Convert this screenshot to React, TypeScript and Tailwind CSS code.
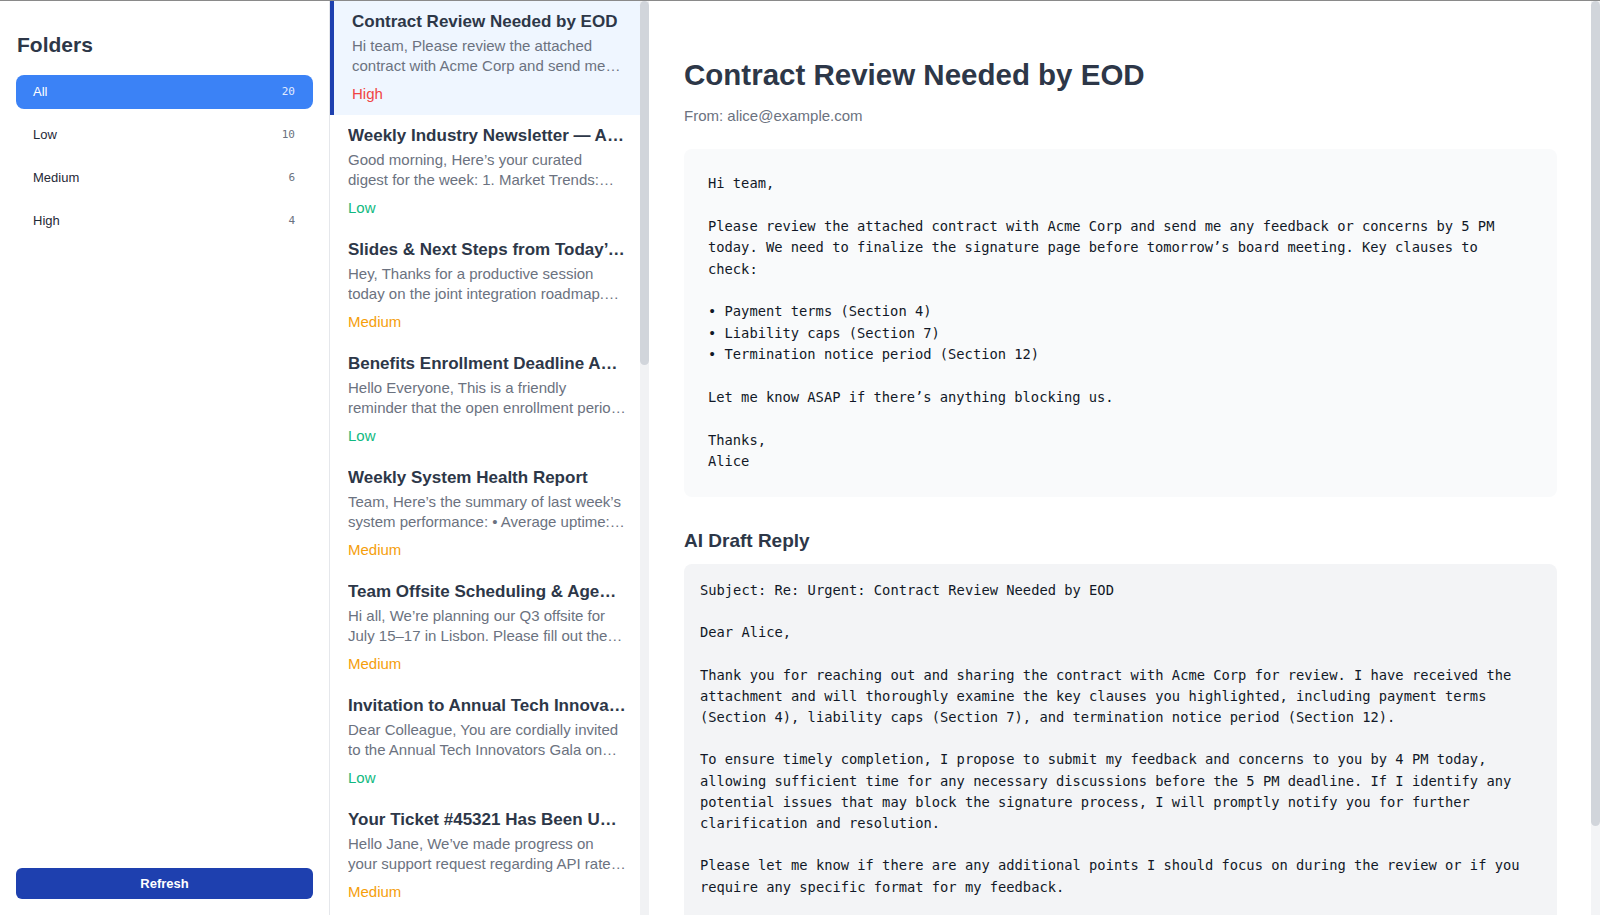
import React, { useState } from "react";

type Priority = "Low" | "Medium" | "High";

type Email = {
  id: number;
  subject: string;
  snippet: string;
  priority: Priority;
};

const emails: Email[] = [
  { id: 1, subject: "Contract Review Needed by EOD", snippet: "Hi team, Please review the attached contract with Acme Corp and send me any feedback or concerns by 5 PM today.", priority: "High" },
  { id: 2, subject: "Weekly Industry Newsletter — April Edition", snippet: "Good morning, Here’s your curated digest for the week: 1. Market Trends: Inflation eases as central banks hold rates.", priority: "Low" },
  { id: 3, subject: "Slides & Next Steps from Today’s Workshop", snippet: "Hey, Thanks for a productive session today on the joint integration roadmap. Attached are the slides.", priority: "Medium" },
  { id: 4, subject: "Benefits Enrollment Deadline Approaching", snippet: "Hello Everyone, This is a friendly reminder that the open enrollment period closes this Friday.", priority: "Low" },
  { id: 5, subject: "Weekly System Health Report", snippet: "Team, Here’s the summary of last week’s system performance: • Average uptime: 99.98% • Incidents: 2", priority: "Medium" },
  { id: 6, subject: "Team Offsite Scheduling & Agenda Input", snippet: "Hi all, We’re planning our Q3 offsite for July 15–17 in Lisbon. Please fill out the availability form.", priority: "Medium" },
  { id: 7, subject: "Invitation to Annual Tech Innovators Gala", snippet: "Dear Colleague, You are cordially invited to the Annual Tech Innovators Gala on Thursday, June 12.", priority: "Low" },
  { id: 8, subject: "Your Ticket #45321 Has Been Updated", snippet: "Hello Jane, We’ve made progress on your support request regarding API rate limits on the sandbox.", priority: "Medium" },
  { id: 9, subject: "Production Outage: Payments Service Down", snippet: "All, The payments service has been returning 500 errors since 9:12 AM. Please join the incident bridge now.", priority: "High" },
  { id: 10, subject: "Lunch & Learn: Intro to Kubernetes", snippet: "Hi everyone, Join us this Wednesday at noon for an informal session on container orchestration.", priority: "Low" },
  { id: 11, subject: "Q2 Budget Approval Required Today", snippet: "Hi Jane, Finance needs your sign-off on the Q2 marketing budget before the close of business today.", priority: "High" },
  { id: 12, subject: "Office Wi-Fi Maintenance This Weekend", snippet: "Hello, Facilities will be upgrading the office network on Saturday between 8 AM and 2 PM.", priority: "Low" },
  { id: 13, subject: "Customer Feedback Summary — May", snippet: "Team, Below is a roundup of the customer feedback we collected in May, grouped by product area.", priority: "Medium" },
  { id: 14, subject: "New Parking Policy Starting Next Month", snippet: "Dear Staff, Starting July 1, all parking spots in the east garage will require a registered permit.", priority: "Low" },
  { id: 15, subject: "Security Alert: Unusual Sign-in Attempt", snippet: "We detected a sign-in attempt to your account from a new device in an unrecognized location.", priority: "High" },
  { id: 16, subject: "Book Club Pick for June", snippet: "Hi friends, This month we’re reading “The Pragmatic Programmer”. Our first meetup is on the 14th.", priority: "Low" },
  { id: 17, subject: "Updated Holiday Calendar", snippet: "Hello all, Please find attached the updated company holiday calendar for the rest of the year.", priority: "Low" },
  { id: 18, subject: "Design Review Notes: Onboarding Flow", snippet: "Hi team, Thanks for joining the review. Here are the notes and action items from this morning.", priority: "Medium" },
  { id: 19, subject: "Congrats on the Product Launch!", snippet: "Hey Jane, Just wanted to say congrats to you and the team on a smooth launch yesterday.", priority: "Low" },
  { id: 20, subject: "Reminder: Submit Your Timesheet", snippet: "Hi, This is a reminder to submit your timesheet for the current pay period by Friday at 5 PM.", priority: "Low" },
];

const folders: { name: string; count: number }[] = [
  { name: "All", count: 20 },
  { name: "Low", count: 10 },
  { name: "Medium", count: 6 },
  { name: "High", count: 4 },
];

const priorityColor: Record<Priority, string> = {
  Low: "text-[#10b981]",
  Medium: "text-[#f59e0b]",
  High: "text-[#ef4444]",
};

const body = `Hi team,

Please review the attached contract with Acme Corp and send me any feedback or concerns by 5 PM today. We need to finalize the signature page before tomorrow’s board meeting. Key clauses to check:

• Payment terms (Section 4)
• Liability caps (Section 7)
• Termination notice period (Section 12)

Let me know ASAP if there’s anything blocking us.

Thanks,
Alice`;

const draft = `Subject: Re: Urgent: Contract Review Needed by EOD

Dear Alice,

Thank you for reaching out and sharing the contract with Acme Corp for review. I have received the attachment and will thoroughly examine the key clauses you highlighted, including payment terms (Section 4), liability caps (Section 7), and termination notice period (Section 12).

To ensure timely completion, I propose to submit my feedback and concerns to you by 4 PM today, allowing sufficient time for any necessary discussions before the 5 PM deadline. If I identify any potential issues that may block the signature process, I will promptly notify you for further clarification and resolution.

Please let me know if there are any additional points I should focus on during the review or if you require any specific format for my feedback.

Best regards,
[Your Name]`;

// scrollbar look-alike, the page is photographed without native scrollbars
function ScrollTrack({ thumb, track }: { thumb: string; track: string }) {
  return (
    <div className={"w-[9px] shrink-0 " + track}>
      <div className={"w-full rounded-full bg-[#d1d5db] " + thumb} />
    </div>
  );
}

function Sidebar({ active, onSelect }: { active: string; onSelect: (f: string) => void }) {
  return (
    <aside className="w-[330px] shrink-0 border-r border-[#e5e7eb] flex flex-col justify-between px-4 pt-[30px] pb-4">
      <div>
        <h2 className="text-[21px] leading-[28px] font-bold text-[#2d3748] pl-px">Folders</h2>
        <div className="mt-4 flex flex-col gap-[9px]">
          {folders.map((f) => {
            const isActive = f.name === active;
            return (
              <button
                key={f.name}
                onClick={() => onSelect(f.name)}
                className={
                  isActive
                    ? "h-[34px] rounded-lg bg-[#3b82f6] text-white flex items-center justify-between pl-[17px] pr-[18px] text-[13px] font-medium"
                    : "h-[34px] rounded-lg text-[#1f2937] flex items-center justify-between pl-[17px] pr-[18px] text-[13px] font-medium"
                }
              >
                <span>{f.name}</span>
                <span
                  className={
                    isActive
                      ? "font-['DejaVu_Sans_Mono',monospace] text-[11px] text-[#e0ebff]"
                      : "font-['DejaVu_Sans_Mono',monospace] text-[11px] text-[#6b7280]"
                  }
                >
                  {f.count}
                </span>
              </button>
            );
          })}
        </div>
      </div>
      <button className="h-[31px] w-full rounded-md bg-[#1e40af] text-white text-[13px] font-semibold">
        Refresh
      </button>
    </aside>
  );
}

function EmailList({ selected, onSelect }: { selected: number; onSelect: (id: number) => void }) {
  return (
    <div className="w-[319px] shrink-0 flex">
      <div className="flex-1 min-w-0 overflow-hidden">
        {emails.map((e) => {
          const isSel = e.id === selected;
          return (
            <div
              key={e.id}
              onClick={() => onSelect(e.id)}
              className={
                isSel
                  ? "h-[114px] cursor-pointer border-l-4 border-[#1e40af] bg-[#eff6ff] pl-[18px] pr-[14px] pt-[10px]"
                  : "h-[114px] cursor-pointer pl-[18px] pr-[14px] pt-[10px]"
              }
            >
              <div className="truncate text-[17px] leading-[22px] font-bold text-[#2d3748]">{e.subject}</div>
              <div className="mt-[3px] line-clamp-2 text-[15px] leading-[20px] text-[#6b7280]">{e.snippet}</div>
              <div className={"mt-[8px] text-[15px] leading-[20px] " + priorityColor[e.priority]}>{e.priority}</div>
            </div>
          );
        })}
      </div>
      <ScrollTrack thumb="h-[364px]" track="bg-[#f1f2f4]" />
    </div>
  );
}

export default function App() {
  const [folder, setFolder] = useState("All");
  const [selected, setSelected] = useState(1);

  return (
    <div className="h-screen flex border-t border-[#8a8a8a] bg-white font-['Liberation_Sans',Arial,sans-serif] overflow-hidden">
      <Sidebar active={folder} onSelect={setFolder} />
      <EmailList selected={selected} onSelect={setSelected} />
      <div className="flex-1 min-w-0 flex">
        <main className="flex-1 min-w-0 overflow-hidden pl-[35px] pr-[34px] pt-[54px] pb-8">
          <h1 className="text-[29.5px] leading-[40px] font-bold text-[#2d3748]">Contract Review Needed by EOD</h1>
          <p className="mt-[10px] text-[15px] leading-[22px] text-[#6b7280]">From: alice@example.com</p>
          <div className="mt-[22px] rounded-lg bg-[#f9fafb] p-6 font-['DejaVu_Sans_Mono',monospace] text-[13.75px] leading-[21.4px] text-[#111827] whitespace-pre-wrap">
            {body}
          </div>
          <h3 className="mt-[30px] text-[19px] leading-[28px] font-bold text-[#2d3748]">AI Draft Reply</h3>
          <div className="mt-[9px] rounded-lg bg-[#f3f4f6] p-4 font-['DejaVu_Sans_Mono',monospace] text-[13.75px] leading-[21.2px] text-[#111827] whitespace-pre-wrap">
            {draft}
          </div>
        </main>
        <ScrollTrack thumb="h-[825px]" track="bg-[#f3f4f6]" />
      </div>
    </div>
  );
}
